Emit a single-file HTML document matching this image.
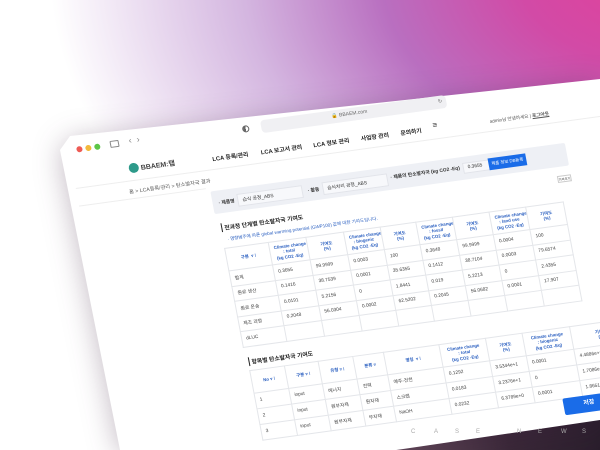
<!DOCTYPE html>
<html><head><meta charset="utf-8">
<style>
*{margin:0;padding:0;box-sizing:border-box}
html,body{width:600px;height:450px;overflow:hidden}
body{position:relative;font-family:"Liberation Sans","Noto Sans CJK KR",sans-serif;background:#fff}
.bg{position:absolute;inset:0;background:radial-gradient(ellipse 600px 420px at 650px -30px,#e2419a 0%,#d24aa6 22%,#b96fc0 45%,#d4b6e0 68%,rgba(255,255,255,0) 100%)}
.dark{position:absolute;inset:0;background:linear-gradient(90deg,rgba(255,255,255,0) 45%,#6a5060 65%,#3a2838 85%,#2a1e2c 100%);clip-path:polygon(0 380px,600px 380px,600px 450px,0 450px)}
.shadow{position:absolute;inset:0;filter:drop-shadow(0 4px 14px rgba(60,30,60,.3))}
.frame{position:absolute;inset:0;background:#fff;clip-path:polygon(70px 136px,600px 79px,600px 420px,410px 448px,300px 464px,124px 470px,60px 150px)}
.case{position:absolute;top:429px;font-size:6px;color:#aaa}
.win{position:absolute;left:66px;top:137px;width:620px;height:355px;
transform-origin:0 0;transform:matrix(0.99,-0.136,0.185,0.98,0,0);overflow:hidden;color:#333;font-size:5px}
.abs{position:absolute}
.dot{position:absolute;top:11px;width:6px;height:6px;border-radius:50%}
.url{position:absolute;left:194px;top:10px;width:187px;height:13px;background:#f0f0f3;border-radius:4px;font-size:5px;color:#666;text-align:center;line-height:13px}
.nav{position:absolute;top:37px;font-size:5.8px;font-weight:bold;color:#222}
.line{position:absolute;left:0;width:620px;height:1px;background:#eee}
.gray{position:absolute;left:132px;top:74px;width:358px;height:23px;background:#eef0f5;border-radius:2px}
.fld{position:absolute;top:6px;font-size:4.8px;font-weight:bold;color:#333;white-space:nowrap}
.inp{display:inline-block;background:#f7f8fb;border:0.5px solid #e2e4ea;padding:2px 4px;width:66px;font-weight:normal;margin-left:3px}
.btn{position:absolute;left:279px;top:5px;width:38px;height:12px;background:#1a6ce8;color:#fff;font-size:4.3px;text-align:center;line-height:12px}
table{border-collapse:collapse;font-size:4.8px;color:#444;position:absolute;table-layout:fixed}
td,th{border:0.5px solid #e4e6ea;text-align:left;padding:0 4px;font-weight:normal;white-space:nowrap;overflow:hidden}
th{color:#2a5fc0;text-align:center;font-size:4.4px;line-height:5.2px;font-weight:bold}
.t1{left:135px;top:132px;width:342px;border-top:1px solid #7aa2e8}
.t1 td{height:15.5px}
.t1 th{height:23px}
.ttl{position:absolute;font-size:5.8px;font-weight:bold;color:#222;border-left:1.5px solid #222;padding-left:2px}
.t2{left:137px;top:257px;width:383px;border-top:1px solid #7aa2e8}
.t2 td{height:16px}
.t2 th{height:23px}
</style></head><body>
<div class="bg"></div>
<div class="dark"></div>
<div class="shadow"><div class="frame"></div></div>
<div class="win">
 <div class="dot" style="left:8px;background:#ee5b55"></div>
 <div class="dot" style="left:17px;background:#f3b93c"></div>
 <div class="dot" style="left:26px;background:#5cc647"></div>
 <div class="abs" style="left:42px;top:10px;width:9px;height:7px;border:1px solid #888;border-radius:1px"></div>
 <div class="abs" style="left:61px;top:7px;font-size:9px;color:#888">‹ &nbsp;›</div>
 <div class="abs" style="left:175px;top:13px;width:7px;height:7px;border:1px solid #666;border-radius:50%;background:linear-gradient(90deg,#666 50%,#fff 50%)"></div>
 <div class="url">🔒 BBAEM.com <span style="float:right;margin-right:4px">↻</span></div>
 <div class="abs" style="left:535px;top:17px;font-size:8px;color:#888">⊕ &nbsp;⇪ &nbsp;+</div>
 <div class="abs" style="left:56px;top:35px;width:10px;height:10px;border-radius:50%;background:#2d9a8a"></div>
 <div class="abs" style="left:68px;top:36px;font-size:7px;font-weight:bold;color:#444">BBAEM:탭</div>
 <div class="nav" style="left:140px">LCA 등록/관리</div>
 <div class="nav" style="left:189px">LCA 보고서 관리</div>
 <div class="nav" style="left:242px">LCA 정보 관리</div>
 <div class="nav" style="left:290px">사업장 관리</div>
 <div class="nav" style="left:330px">문의하기</div>
 <div class="nav" style="left:363px;font-size:8px;top:34px">≡</div>
 <div class="abs" style="left:420px;top:40px;font-size:4.6px;color:#555">admin님 안녕하세요 | <b style="text-decoration:underline">로그아웃</b></div>
 <div class="line" style="top:52px"></div>
 <div class="abs" style="left:52px;top:60px;font-size:5.2px;color:#555">홈 &gt; LCA등록/관리 &gt; 탄소발자국 결과</div>
 <div class="line" style="top:70px;width:128px"></div>
 <div class="gray">
  <div class="fld" style="left:6px">· 제품명<span class="inp">습식 공정_ABS</span></div>
  <div class="fld" style="left:96px">· 활동<span class="inp">습식처리 공정_ABS</span></div>
  <div class="fld" style="left:180px">· 제품의 탄소발자국 (kg CO2 -Eq)<span class="inp" style="width:28px">0.3655</span></div>
  <div class="btn">제품 정보 DB등록</div>
 </div>
 <div class="abs" style="left:476px;top:106px;width:14px;height:7px;border:0.5px solid #ccc;font-size:3.2px;text-align:center;line-height:7px">가져오기</div>
 <div class="ttl" style="left:136px;top:107px">전과정 단계별 탄소발자국 기여도</div>
 <div class="abs" style="left:140px;top:121px;font-size:4.5px;color:#2a5fc0">· 영향범주에 따른 global warming potential (GWP100) 값에 대한 기여도입니다.</div>
 <table class="t1">
  <colgroup><col style="width:44px"><col style="width:38px"><col style="width:38px"><col style="width:37px"><col style="width:36px"><col style="width:37px"><col style="width:37px"><col style="width:37px"><col style="width:38px"></colgroup>
  <tr><th>구분 &nbsp;▿ ⁞</th><th>Climate change<br>: total<br>(kg CO2 -Eq)</th><th>기여도<br>(%)</th><th>Climate change<br>: biogenic<br>(kg CO2 -Eq)</th><th>기여도<br>(%)</th><th>Climate change<br>: fossil<br>(kg CO2 -Eq)</th><th>기여도<br>(%)</th><th>Climate change<br>: land use<br>(kg CO2 -Eq)</th><th>기여도<br>(%)</th></tr>
  <tr><td>합계</td><td>0.3655</td><td>99.9999</td><td>0.0003</td><td>100</td><td>0.3648</td><td>99.9999</td><td>0.0004</td><td>100</td></tr>
  <tr><td>원료 생산</td><td>0.1416</td><td>38.7539</td><td>0.0001</td><td>35.6355</td><td>0.1412</td><td>38.7104</td><td>0.0003</td><td>79.6574</td></tr>
  <tr><td>원료 운송</td><td>0.0191</td><td>5.2156</td><td>0</td><td>1.8441</td><td>0.019</td><td>5.2213</td><td>0</td><td>2.4355</td></tr>
  <tr><td>제조 과정</td><td>0.2048</td><td>56.0304</td><td>0.0002</td><td>62.5202</td><td>0.2045</td><td>56.0682</td><td>0.0001</td><td>17.907</td></tr>
  <tr><td>dLUC</td><td></td><td></td><td></td><td></td><td></td><td></td><td></td><td></td></tr>
 </table>
 <div class="ttl" style="left:138px;top:244px">항목별 탄소발자국 기여도</div>
 <table class="t2">
  <colgroup><col style="width:35px"><col style="width:34px"><col style="width:35px"><col style="width:31px"><col style="width:56px"><col style="width:47px"><col style="width:37px"><col style="width:48px"><col style="width:60px"></colgroup>
  <tr><th>No ▿ ⁞</th><th>구분 ▿ ⁞</th><th>유형 ▿ ⁞</th><th>분류 ▿</th><th>명칭 &nbsp;▿ ⁞</th><th>Climate change<br>: total<br>(kg CO2 -Eq)</th><th>기여도<br>(%)</th><th>Climate change<br>: biogenic<br>(kg CO2 -Eq)</th><th>기여도<br>(%)</th></tr>
  <tr><td>1</td><td>input</td><td>에너지</td><td>전력</td><td>예주-전헌</td><td>0.1292</td><td>3.5344e+1</td><td>0.0001</td><td>4.4886e+1</td></tr>
  <tr><td>2</td><td>input</td><td>원부자재</td><td>원자재</td><td>스크랩</td><td>0.0183</td><td>3.2376e+1</td><td>0</td><td>1.7086e+1</td></tr>
  <tr><td>3</td><td>input</td><td>원부자재</td><td>부자재</td><td>NaOH</td><td>0.0232</td><td>6.3789e+0</td><td>0.0001</td><td>1.8651e+1</td></tr>
 </table>
 <div class="abs" style="left:440px;top:328px;width:70px;height:17px;background:#1a6ce8;color:#fff;font-size:6px;font-weight:bold;line-height:17px;padding-left:20px;border-radius:2px">저장</div>
</div>
<div class="case" style="left:411px">C</div><div class="case" style="left:434px">A</div><div class="case" style="left:455px">S</div><div class="case" style="left:476px">E</div>
<div class="case" style="left:517px">N</div><div class="case" style="left:538px">E</div><div class="case" style="left:561px">W</div><div class="case" style="left:582px">S</div>
</body></html>
